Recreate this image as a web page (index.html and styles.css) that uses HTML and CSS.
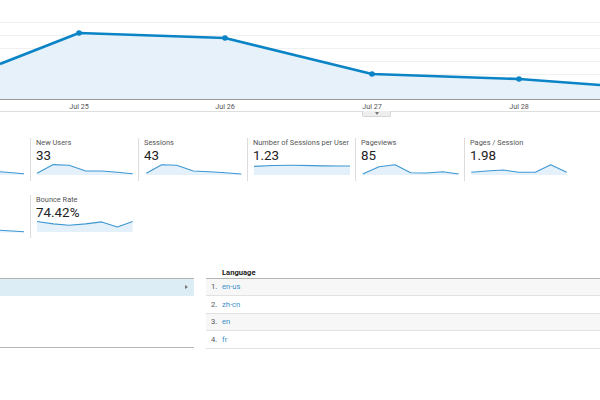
FILE: index.html
```html
<!DOCTYPE html>
<html>
<head>
<meta charset="utf-8">
<link rel="stylesheet" href="styles.css">
</head>
<body>
<div class="page">
  <div class="chart">
    <svg class="chart-svg" width="600" height="111" viewBox="0 0 600 111">
      <g class="grid">
        <line x1="0" y1="22.5" x2="600" y2="22.5"/>
        <line x1="0" y1="35.5" x2="600" y2="35.5"/>
        <line x1="0" y1="48.5" x2="600" y2="48.5"/>
        <line x1="0" y1="61.5" x2="600" y2="61.5"/>
        <line x1="0" y1="74.5" x2="600" y2="74.5"/>
        <line x1="0" y1="87.5" x2="600" y2="87.5"/>
      </g>
      <path class="area" d="M0,64 L79,33 L225,38 L372,74 L519,79 L600,85 L600,99 L0,99 Z"/>
      <line class="baseline" x1="0" y1="99.5" x2="600" y2="99.5"/>
      <path class="line" d="M0,64 L79,33 L225,38 L372,74 L519,79 L600,85"/>
      <g class="pts">
        <circle cx="79" cy="33" r="2.8"/>
        <circle cx="225" cy="38" r="2.8"/>
        <circle cx="372" cy="74" r="2.8"/>
        <circle cx="519" cy="79" r="2.8"/>
      </g>
      <g class="axis">
        <text x="79" y="108.5">Jul 25</text>
        <text x="225" y="108.5">Jul 26</text>
        <text x="372" y="108.5">Jul 27</text>
        <text x="519" y="108.5">Jul 28</text>
      </g>
    </svg>
    <div class="chart-tab"><span class="tri"></span></div>
  </div>

  <div class="metrics">
    <div class="metric partial">
      <svg class="spark" width="30" height="12" viewBox="0 0 30 12">
        <path class="sp-area" d="M0,7.7 L24,9.7 L24,11 L0,11 Z"/>
        <path class="sp-line" d="M0,7.7 L24,9.7"/>
      </svg>
    </div>
    <div class="metric">
      <div class="m-label">New Users</div>
      <div class="m-value">33</div>
      <svg class="spark" width="100" height="12" viewBox="0 0 100 12">
        <path class="sp-area" d="M1,9.3 L17.3,0.6 L33,1.3 L49.7,7 L65.7,7 L81.3,8.3 L96.7,9.7 L96.7,11 L1,11 Z"/>
        <path class="sp-line" d="M1,9.3 L17.3,0.6 L33,1.3 L49.7,7 L65.7,7 L81.3,8.3 L96.7,9.7"/>
      </svg>
    </div>
    <div class="metric">
      <div class="m-label">Sessions</div>
      <div class="m-value">43</div>
      <svg class="spark" width="100" height="12" viewBox="0 0 100 12">
        <path class="sp-area" d="M2.3,9.3 L17.7,0.7 L32.7,1.3 L49.3,7 L65.3,7.7 L81,8.7 L97.3,10 L97.3,11 L2.3,11 Z"/>
        <path class="sp-line" d="M2.3,9.3 L17.7,0.7 L32.7,1.3 L49.3,7 L65.3,7.7 L81,8.7 L97.3,10"/>
      </svg>
    </div>
    <div class="metric">
      <div class="m-label">Number of Sessions per User</div>
      <div class="m-value">1.23</div>
      <svg class="spark" width="100" height="12" viewBox="0 0 100 12">
        <path class="sp-area" d="M1,2.4 C20,1.2 40,0.8 60,1.6 C75,2 85,2 97,2 L97,11 L1,11 Z"/>
        <path class="sp-line" d="M1,2.4 C20,1.2 40,0.8 60,1.6 C75,2 85,2 97,2"/>
      </svg>
    </div>
    <div class="metric">
      <div class="m-label">Pageviews</div>
      <div class="m-value">85</div>
      <svg class="spark" width="100" height="12" viewBox="0 0 100 12">
        <path class="sp-area" d="M1.7,10 L18,2.7 L34,0.8 L49.7,8.7 L65.7,9 L81.7,7.7 L97.7,10 L97.7,11 L1.7,11 Z"/>
        <path class="sp-line" d="M1.7,10 L18,2.7 L34,0.8 L49.7,8.7 L65.7,9 L81.7,7.7 L97.7,10"/>
      </svg>
    </div>
    <div class="metric">
      <div class="m-label">Pages / Session</div>
      <div class="m-value">1.98</div>
      <svg class="spark" width="100" height="12" viewBox="0 0 100 12">
        <path class="sp-area" d="M1.3,8.3 L16.7,7 L33.3,6 L49,8.3 L65.3,8.3 L80.7,0.8 L96.7,8.3 L96.7,11 L1.3,11 Z"/>
        <path class="sp-line" d="M1.3,8.3 L16.7,7 L33.3,6 L49,8.3 L65.3,8.3 L80.7,0.8 L96.7,8.3"/>
      </svg>
    </div>

    <div class="metric partial">
      <svg class="spark" width="30" height="12" viewBox="0 0 30 12">
        <path class="sp-area" d="M0,9.2 L24,10.7 L24,11.5 L0,11.5 Z"/>
        <path class="sp-line" d="M0,9.2 L24,10.7"/>
      </svg>
    </div>
    <div class="metric">
      <div class="m-label">Bounce Rate</div>
      <div class="m-value">74.42%</div>
      <svg class="spark" width="100" height="12" viewBox="0 0 100 12">
        <path class="sp-area" d="M1,0.5 L17.3,2.9 L33,4.2 L49.7,2.9 L65.7,0.9 L81.3,5.9 L96.7,0.5 L96.7,11 L1,11 Z"/>
        <path class="sp-line" d="M1,0.5 L17.3,2.9 L33,4.2 L49.7,2.9 L65.7,0.9 L81.3,5.9 L96.7,0.5"/>
      </svg>
    </div>
  </div>

  <div class="tables">
    <div class="left-panel">
      <div class="lp-body">
        <div class="lp-row sel"><span class="arrow"></span></div>
      </div>
    </div>
    <table class="lang">
      <thead>
        <tr><th class="num"></th><th class="name">Language</th></tr>
      </thead>
      <tbody>
        <tr class="alt"><td class="num">1.</td><td class="name"><a>en-us</a></td></tr>
        <tr><td class="num">2.</td><td class="name"><a>zh-cn</a></td></tr>
        <tr class="alt"><td class="num">3.</td><td class="name"><a>en</a></td></tr>
        <tr><td class="num">4.</td><td class="name"><a>fr</a></td></tr>
      </tbody>
    </table>
  </div>
</div>
</body>
</html>
```

FILE: styles.css
```css
* { box-sizing: border-box; }
html, body {
  margin: 0;
  padding: 0;
  background: #fff;
  font-family: Roboto, "Liberation Sans", Arial, sans-serif;
  color: #222;
  overflow: hidden;
}
.page {
  width: 600px;
  height: 400px;
}

/* Chart */
.chart {
  position: relative;
  height: 112px;
  border-bottom: 1px solid #dedede;
}
.chart-svg { display: block; }
.grid line { stroke: #f0f0f0; stroke-width: 1; }
.area { fill: #e6f1fa; }
.baseline { stroke: #9a9a9a; stroke-width: 1; }
.line {
  fill: none;
  stroke: #0b84c6;
  stroke-width: 2.6;
  stroke-linejoin: round;
}
.pts circle { fill: #0b84c6; }
.axis text {
  font-family: Roboto, "Liberation Sans", Arial, sans-serif;
  font-size: 7.2px;
  fill: #555;
  text-anchor: middle;
}
.chart-tab {
  position: absolute;
  left: 362px;
  top: 111px;
  width: 29px;
  height: 6px;
  background: #eeeeee;
  border: 1px solid #d6d6d6;
  border-top: none;
  border-radius: 0 0 2px 2px;
}
.tri {
  position: absolute;
  left: 12px;
  top: 1px;
  width: 0;
  height: 0;
  border-left: 2.5px solid transparent;
  border-right: 2.5px solid transparent;
  border-top: 3px solid #777;
}

/* Metrics */
.metrics {
  display: grid;
  grid-template-columns: 30px 108px 109px 108px 109px 108px;
  grid-auto-rows: 43px;
  row-gap: 14px;
  margin-top: 26px;
}
.metric {
  border-left: 1px solid #dcdcdc;
  padding-left: 5px;
  overflow: visible;
}
.metric.partial {
  border-left: none;
  padding-left: 0;
  padding-top: 26px;
}
.m-label {
  font-size: 7.4px;
  line-height: 10px;
  color: #555;
  white-space: nowrap;
}
.m-value {
  font-size: 13.4px;
  line-height: 16px;
  color: #222;
}
.spark {
  display: block;
  overflow: visible;
}
.sp-area { fill: #e5f1fa; }
.sp-line {
  fill: none;
  stroke: #3d97d3;
  stroke-width: 1.1;
  stroke-linejoin: round;
}

/* Tables */
.tables {
  display: flex;
  gap: 12px;
  margin-top: 26px;
}
.left-panel {
  width: 194px;
  padding-top: 14px;
}
.lp-body {
  border-top: 1px solid #b5b5b5;
  border-bottom: 1px solid #b5b5b5;
  height: 70px;
}
.lp-row {
  position: relative;
  height: 17px;
}
.lp-row.sel { background: #dcedf6; }
.arrow {
  position: absolute;
  left: 185px;
  top: 6px;
  width: 0;
  height: 0;
  border-top: 2.5px solid transparent;
  border-bottom: 2.5px solid transparent;
  border-left: 3px solid #777;
}
.lang {
  flex: 1;
  border-collapse: collapse;
  font-size: 7.6px;
}
.lang th {
  height: 14px;
  padding: 0 0 1px 0;
  text-align: left;
  font-weight: bold;
  color: #222;
  border-bottom: 1px solid #b5b5b5;
  vertical-align: bottom;
}
.lang td {
  height: 17.6px;
  padding: 0;
  border-bottom: 1px solid #e2e2e2;
  vertical-align: middle;
}
.lang tr.alt td { background: #f7f7f7; }
.lang .num {
  width: 16px;
  padding-left: 5px;
  color: #555;
}
.lang .name a {
  color: #3b8fc8;
  text-decoration: none;
}
```
